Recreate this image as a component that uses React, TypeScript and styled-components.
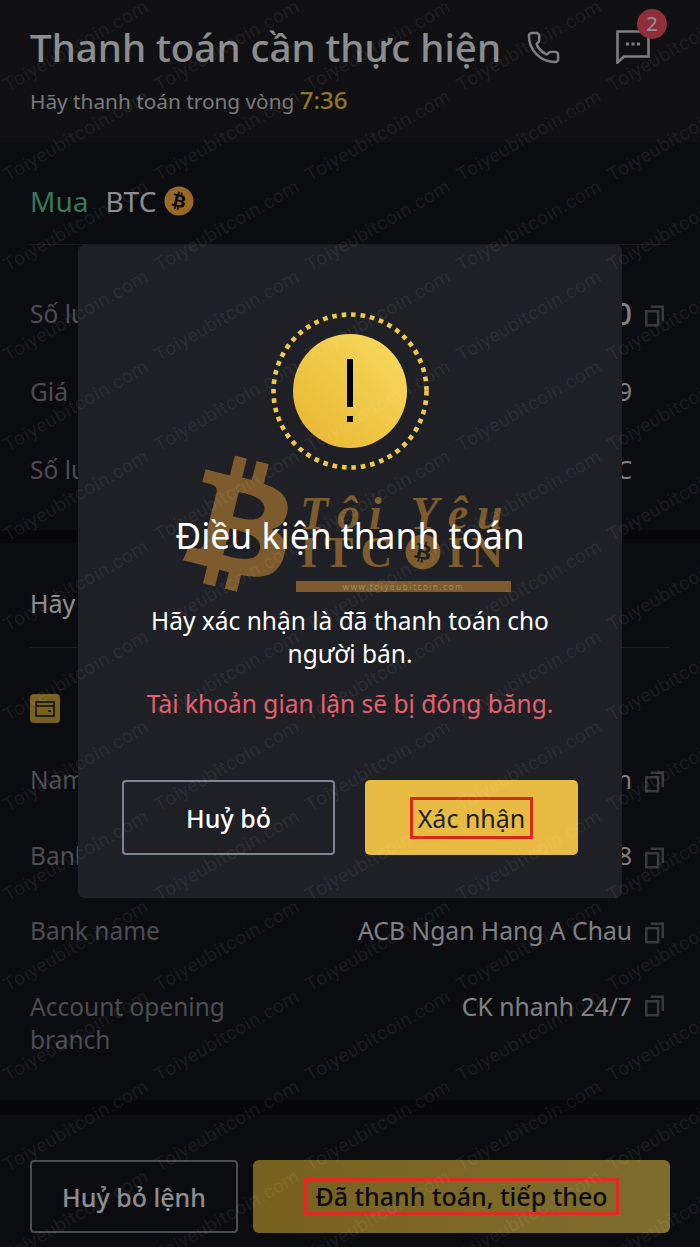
import React from "react";
import styled, { createGlobalStyle } from "styled-components";
import { Phone } from "lucide-react";
import { FaBitcoin, FaBtc } from "react-icons/fa";

const GlobalStyle = createGlobalStyle`
	html, body {
		margin: 0;
		padding: 0;
		background: #0b0c10;
	}
	* {
		box-sizing: border-box;
	}
`;

const CopyIcon: React.FC = () => (
	<CopySvg viewBox="0 0 20 22" fill="none" stroke="currentColor" strokeWidth="2.6">
		<rect x="1.3" y="6" width="12.5" height="14.7" />
		<path d="M6 1.3h12.7v15" />
	</CopySvg>
);

const ChatIcon: React.FC = () => (
	<svg width="34" height="34" viewBox="0 0 34 34" fill="none">
		<path d="M1.5 1.5h31v25H8l-6.5 6z" stroke="#d2d2d4" strokeWidth="2.6" />
		<rect x="10" y="12.5" width="3" height="3" fill="#d2d2d4" />
		<rect x="15.5" y="12.5" width="3" height="3" fill="#d2d2d4" />
		<rect x="21" y="12.5" width="3" height="3" fill="#d2d2d4" />
	</svg>
);

const WalletIcon: React.FC = () => (
	<svg width="20" height="16" viewBox="0 0 20 16" fill="none" stroke="#16171a" strokeWidth="1.6">
		<rect x="1" y="1" width="18" height="14" />
		<path d="M1 5h18M13 10h3" />
	</svg>
);

const WarningIcon: React.FC = () => (
	<Ring>
		<svg width="158" height="158" viewBox="0 0 158 158" fill="none">
			<circle cx="79" cy="79" r="76.5" stroke="#f0c94a" strokeWidth="4.6" strokeDasharray="4.6 4.9" />
		</svg>
		<Disc>
			<svg width="8" height="64" viewBox="0 0 8 64" fill="#000">
				<rect x="1" y="0" width="6" height="48" />
				<rect x="1" y="57" width="6" height="6" />
			</svg>
		</Disc>
	</Ring>
);

export default function App() {
	return (
		<Page>
			<GlobalStyle />
			<Header>
				<TitleRow>
					<Title>Thanh toán cần thực hiện</Title>
					<HeaderIcons>
						<Phone size={35} color="#d2d2d4" strokeWidth={1.7} />
						<ChatWrap>
							<ChatIcon />
							<Badge>2</Badge>
						</ChatWrap>
					</HeaderIcons>
				</TitleRow>
				<Countdown>
					Hãy thanh toán trong vòng <Time>7:36</Time>
				</Countdown>
			</Header>

			<OrderSection>
				<SideRow>
					<Buy>Mua</Buy>
					<Coin>BTC</Coin>
					<FaBitcoin size={30} color="#ffb13e" />
				</SideRow>
				<Rows $height={78} $top={29}>
					<Row>
						<Label>Số lượng</Label>
						<Value $strong>000</Value>
						<CopyIcon />
					</Row>
					<Row>
						<Label>Giá</Label>
						<Value>9</Value>
						<CopySpace />
					</Row>
					<Row>
						<Label>Số lượng</Label>
						<Value>BTC</Value>
						<CopySpace />
					</Row>
				</Rows>
			</OrderSection>

			<PaymentSection>
				<MethodTitle>Hãy chuyển khoản</MethodTitle>
				<WalletBadge>
					<WalletIcon />
				</WalletBadge>
				<Rows $height={75.5} $top={19}>
					<Row>
						<Label>Name</Label>
						<Value>n</Value>
						<CopyIcon />
					</Row>
					<Row>
						<Label>Bank account</Label>
						<Value>8</Value>
						<CopyIcon />
					</Row>
					<Row>
						<Label>Bank name</Label>
						<Value>ACB Ngan Hang A Chau</Value>
						<CopyIcon />
					</Row>
					<Row $top>
						<Label>Account opening branch</Label>
						<Value>CK nhanh 24/7</Value>
						<CopyIcon />
					</Row>
				</Rows>
			</PaymentSection>

			<Footer>
				<CancelOrder>Huỷ bỏ lệnh</CancelOrder>
				<PaidButton>
					<Marked>Đã thanh toán, tiếp theo</Marked>
				</PaidButton>
			</Footer>

			<Overlay>
				<Modal>
					<Logo>
						<LogoSymbol>
							<FaBtc size={132} color="#7d5b2c" />
						</LogoSymbol>
						<LogoScript>Tôi Yêu</LogoScript>
						<LogoName>
							<span>ITC</span>
							<FaBitcoin size={36} color="#7d5b2c" />
							<span>IN</span>
						</LogoName>
						<LogoBar>www.toiyeubitcoin.com</LogoBar>
					</Logo>
					<WarningIcon />
					<ModalTitle>Điều kiện thanh toán</ModalTitle>
					<ModalText>Hãy xác nhận là đã thanh toán cho người bán.</ModalText>
					<ModalWarning>Tài khoản gian lận sẽ bị đóng băng.</ModalWarning>
					<ModalActions>
						<GhostButton>Huỷ bỏ</GhostButton>
						<ConfirmButton>
							<MarkedSmall>Xác nhận</MarkedSmall>
						</ConfirmButton>
					</ModalActions>
				</Modal>
			</Overlay>

			<Watermarks>
				{Array.from({ length: 70 }, (_, i) => (
					<Watermark key={i}>Toiyeubitcoin.com</Watermark>
				))}
			</Watermarks>
		</Page>
	);
}

const Page = styled.div`
	position: relative;
	width: 700px;
	height: 1247px;
	overflow: hidden;
	background: #0c0d11;
	font-family: "Noto Sans", Roboto, sans-serif;
	color: #eaecef;
`;

const Header = styled.header`
	height: 142px;
	padding: 24px 50px 0 30px;
	background: #1b1c21;
`;

const TitleRow = styled.div`
	display: flex;
	align-items: center;
	justify-content: space-between;
	height: 46px;
`;

const Title = styled.h1`
	margin: 0;
	font-size: 38.5px;
	font-weight: 500;
	line-height: 46px;
	white-space: nowrap;
`;

const HeaderIcons = styled.div`
	display: flex;
	align-items: center;
	gap: 55px;
`;

const ChatWrap = styled.div`
	position: relative;
	height: 34px;
`;

const Badge = styled.span`
	position: absolute;
	top: -21px;
	right: -17px;
	width: 30px;
	height: 30px;
	border-radius: 50%;
	background: #f04b66;
	color: #f4f4f4;
	font-size: 20px;
	line-height: 30px;
	text-align: center;
`;

const Countdown = styled.p`
	margin: 15px 0 0;
	font-size: 20.8px;
	line-height: 30px;
	color: #c8cacd;
`;

const Time = styled.span`
	font-size: 24px;
	font-weight: 500;
	color: #f0c53f;
`;

const OrderSection = styled.section`
	height: 388px;
	padding: 0 30px;
	background: #12141b;
`;

const SideRow = styled.div`
	display: flex;
	align-items: center;
	height: 103px;
	padding-top: 15px;
	border-bottom: 1px solid #2f3138;
	font-size: 28px;
`;

const Buy = styled.span`
	margin-right: 17px;
	color: #5fc792;
`;

const Coin = styled.span`
	margin-right: 8px;
	color: #eaecef;
`;

const Rows = styled.div<{ $height: number; $top: number }>`
	display: grid;
	grid-auto-rows: ${p => p.$height}px;
	padding-top: ${p => p.$top}px;
`;

const Row = styled.div<{ $top?: boolean }>`
	display: flex;
	align-items: ${p => (p.$top ? "flex-start" : "center")};
	padding-top: ${p => (p.$top ? "21px" : "0")};
`;

const Label = styled.span`
	flex: 0 0 205px;
	font-size: 24.5px;
	line-height: 33px;
	color: #7c8088;
`;

const Value = styled.span<{ $strong?: boolean }>`
	flex: 1;
	text-align: right;
	font-size: ${p => (p.$strong ? "30px" : "24.7px")};
	font-weight: ${p => (p.$strong ? 500 : 400)};
	line-height: 33px;
	color: #d4d6d9;
`;

const CopySvg = styled.svg`
	flex: none;
	width: 19px;
	height: 22px;
	margin: 5px 6px 0 13px;
	color: #5c5f66;
`;

const CopySpace = styled.span`
	flex: none;
	width: 38px;
`;

const PaymentSection = styled.section`
	height: 557px;
	margin-top: 13px;
	padding: 0 30px;
	background: #12141b;
`;

const MethodTitle = styled.div`
	height: 105px;
	padding-top: 45px;
	border-bottom: 1px solid #2f3138;
	font-size: 25px;
	line-height: 30px;
	color: #eaecef;
`;

const WalletBadge = styled.div`
	display: flex;
	align-items: center;
	justify-content: center;
	width: 30px;
	height: 29px;
	margin-top: 46px;
	border-radius: 4px;
	background: #c9a235;
`;

const Footer = styled.footer`
	display: flex;
	gap: 15px;
	height: 132px;
	margin-top: 15px;
	padding: 45px 30px 14px;
	background: #12141b;
`;

const CancelOrder = styled.button`
	flex: 0 0 208px;
	height: 73px;
	border: 2px solid #7c8088;
	border-radius: 4px;
	background: transparent;
	color: #eaecef;
	font-family: inherit;
	font-size: 25px;
	font-weight: 500;
`;

const PaidButton = styled.button`
	flex: 1;
	display: flex;
	align-items: center;
	justify-content: center;
	height: 73px;
	padding: 0;
	border: 0;
	border-radius: 6px;
	background: linear-gradient(90deg, #c9a235, #d4b64c);
	font-family: inherit;
`;

/* the red marks were drawn on the screenshot, so they sit above the dimming layer */
const Marked = styled.span`
	position: relative;
	z-index: 1;
	display: block;
	width: 315px;
	height: 37px;
	border: 3px solid #e32a22;
	color: #0c0c0d;
	font-size: 25px;
	font-weight: 500;
	line-height: 31px;
	text-align: center;
	white-space: nowrap;
`;

const Overlay = styled.div`
	position: absolute;
	inset: 0;
	display: flex;
	justify-content: center;
	align-items: flex-start;
	padding-top: 245px;
	background: rgba(0, 0, 0, 0.4);
`;

const Modal = styled.div`
	position: relative;
	display: flex;
	flex-direction: column;
	align-items: center;
	width: 544px;
	height: 653px;
	padding: 67px 44px 0;
	border-radius: 6px;
	background: #1e2025;
`;

const Logo = styled.div`
	position: absolute;
	left: 100px;
	top: 212px;
	width: 340px;
	height: 140px;
`;

const LogoSymbol = styled.div`
	position: absolute;
	left: -3px;
	top: 2px;
	transform: rotate(14deg);
`;

const LogoScript = styled.div`
	position: absolute;
	left: 122px;
	top: 30px;
	font-family: "Liberation Serif", serif;
	font-size: 46px;
	font-style: italic;
	font-weight: 700;
	letter-spacing: 9px;
	color: #7d5b2c;
	white-space: nowrap;
`;

const LogoName = styled.div`
	position: absolute;
	left: 122px;
	top: 74px;
	display: flex;
	align-items: center;
	gap: 6px;
	width: 212px;
	height: 42px;
	font-family: "Liberation Serif", serif;
	font-size: 44px;
	font-weight: 700;
	letter-spacing: 7px;
	color: #7d5b2c;
	white-space: nowrap;
`;

const LogoBar = styled.div`
	position: absolute;
	left: 118px;
	top: 124px;
	width: 215px;
	height: 11px;
	background: #7d5b2c;
	color: #a08a68;
	font-size: 8px;
	line-height: 11px;
	letter-spacing: 1.6px;
	text-align: center;
`;

const Ring = styled.div`
	position: relative;
	display: flex;
	align-items: center;
	justify-content: center;
	width: 158px;
	height: 158px;

	> svg {
		position: absolute;
		inset: 0;
	}
`;

const Disc = styled.div`
	display: flex;
	align-items: center;
	justify-content: center;
	width: 114px;
	height: 114px;
	border-radius: 50%;
	background: linear-gradient(45deg, #e8b42f, #f8dd60);
`;

const ModalTitle = styled.h2`
	position: relative;
	margin: 43px 0 0;
	font-size: 35.5px;
	font-weight: 400;
	line-height: 44px;
	color: #fff;
	white-space: nowrap;
`;

const ModalText = styled.p`
	position: relative;
	margin: 47px 0 0;
	max-width: 420px;
	font-size: 24.5px;
	line-height: 33px;
	text-align: center;
	color: #fff;
`;

const ModalWarning = styled.p`
	position: relative;
	margin: 17px 0 0;
	font-size: 24.5px;
	line-height: 33px;
	color: #e4606f;
	white-space: nowrap;
`;

const ModalActions = styled.div`
	position: relative;
	display: grid;
	grid-template-columns: 213px 213px;
	gap: 30px;
	margin-top: 60px;
`;

const GhostButton = styled.button`
	height: 75px;
	border: 2px solid #7c8593;
	border-radius: 4px;
	background: transparent;
	color: #fff;
	font-family: inherit;
	font-size: 25px;
	font-weight: 500;
`;

const ConfirmButton = styled.button`
	display: flex;
	align-items: center;
	justify-content: center;
	height: 75px;
	border: 0;
	border-radius: 5px;
	background: #e8bc42;
	font-family: inherit;
`;

const MarkedSmall = styled.span`
	display: block;
	width: 123px;
	height: 42px;
	border: 3px solid #e0251c;
	color: #1e2025;
	font-size: 25px;
	font-weight: 400;
	line-height: 36px;
	text-align: center;
	white-space: nowrap;
`;

const Watermarks = styled.div`
	position: absolute;
	z-index: 2;
	inset: 0;
	display: grid;
	grid-template-columns: repeat(5, 151px);
	grid-auto-rows: 90px;
	pointer-events: none;
`;

const Watermark = styled.span`
	display: flex;
	align-items: center;
	justify-content: center;
	transform: rotate(-30deg);
	font-family: Roboto, sans-serif;
	font-size: 19px;
	letter-spacing: 0.5px;
	color: rgba(255, 255, 255, 0.075);
	white-space: nowrap;
`;
